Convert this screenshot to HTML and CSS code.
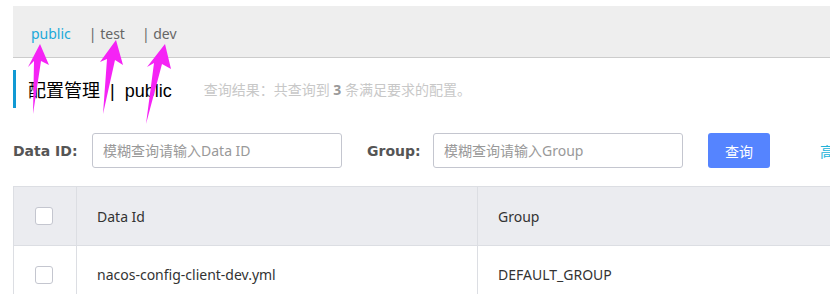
FILE: index.html
```html
<!DOCTYPE html>
<html>
    <head>
        <title>配置管理 - Nacos</title>
        <meta charset="utf-8">
        <link rel="stylesheet" href="styles.css">
    </head>
    <body>
        <div class="page">

            <div class="nsbar">
                <span class="ns active">public</span>
                <span class="ns">| test</span>
                <span class="ns">| dev</span>
            </div>

            <div class="title">
                <h1>配置管理<span class="sep">|</span>public</h1>
                <span class="summary">查询结果：共查询到 <b>3</b> 条满足要求的配置。</span>
            </div>

            <form class="search">
                <label for="dataId">Data ID:</label>
                <input type="text" id="dataId" placeholder="模糊查询请输入Data ID">
                <label for="group">Group:</label>
                <input type="text" id="group" placeholder="模糊查询请输入Group">
                <input class="btn" type="button" value="查询">
                <a class="advanced" href="#">高级查询</a>
            </form>

            <table class="configs">
                <tr class="head">
                    <th class="check"><span class="box"></span></th>
                    <th class="dataid">Data Id</th>
                    <th>Group</th>
                </tr>
                <tr>
                    <td class="check"><span class="box"></span></td>
                    <td>nacos-config-client-dev.yml</td>
                    <td>DEFAULT_GROUP</td>
                </tr>
            </table>

        </div>

        <!-- annotation arrows drawn over the screenshot -->
        <svg class="arrows" width="830" height="294" viewBox="0 0 830 294">
            <polygon points="40,44 49,65 41,61 33,114 34,61 28,67" />
            <polygon points="116,40 123,65 115,60 103,114 107,59 100,62" />
            <polygon points="165,44 171,69 162,64 146,124 154,63 147,67" />
        </svg>
    </body>
</html>
```
FILE: styles.css
```css
*{
    margin: 0;
    padding: 0;
    box-sizing: border-box;
}

body{
    font-family: "Noto Sans", "Noto Sans CJK SC", sans-serif;
    color: #333;
    overflow: hidden;
}

.page{
    width: 1100px;
    padding: 6px 0 0 13px;
}

.nsbar{
    display: flex;
    align-items: center;
    height: 52px;
    padding: 3px 0 0 18px;
    background-color: #eeeeee;
    border-bottom: 1px solid #cccccc;
    font-size: 14px;
}

.ns{
    color: #666;
    margin-right: 17px;
}

.ns.active{
    color: #21a9d9;
    margin-right: 18px;
}

.title{
    display: flex;
    align-items: center;
    height: 38px;
    margin-top: 12px;
    padding-left: 12px;
    border-left: 3px solid #1199d3;
}

h1{
    font-family: "Liberation Sans", "Noto Sans CJK SC", sans-serif;
    font-size: 18px;
    font-weight: normal;
    color: #000;
}

.sep{
    margin: 0 10px;
}

.summary{
    margin-left: 32px;
    font-size: 14px;
    color: #c8c8c8;
}

.summary b{
    color: #999;
}

.search{
    display: flex;
    align-items: center;
    height: 35px;
    margin-top: 25px;
}

label{
    font-family: "DejaVu Sans", sans-serif;
    font-size: 14px;
    font-weight: bold;
    color: #555;
    width: 79px;
}

label[for=group]{
    width: 66px;
}

input[type=text]{
    width: 250px;
    height: 35px;
    margin-right: 25px;
    padding: 0 10px;
    border: 1px solid #c4c6cf;
    border-radius: 3px;
    font-family: inherit;
    font-size: 14px;
    color: #333;
}

input::placeholder{
    color: #999;
}

.btn{
    width: 62px;
    height: 35px;
    border: none;
    border-radius: 3px;
    background-color: #5584ff;
    color: #fff;
    font-family: inherit;
    font-size: 14px;
}

.advanced{
    margin-left: 50px;
    font-size: 14px;
    color: #21b3d9;
    text-decoration: none;
}

.configs{
    margin-top: 18px;
    width: 1000px;
    border-collapse: collapse;
    border-left: 1px solid #dcdee3;
    border-top: 1px solid #dcdee3;
    font-size: 14px;
    color: #333;
}

th, td{
    text-align: left;
    font-weight: normal;
    padding: 0 20px;
    border-right: 1px solid #dcdee3;
    border-bottom: 1px solid #dcdee3;
}

.head{
    height: 59px;
    background-color: #ebecf0;
}

td{
    height: 58px;
}

.check{
    width: 63px;
    padding: 0 21px;
}

.dataid{
    width: 401px;
}

.box{
    display: block;
    width: 18px;
    height: 18px;
    background-color: #fff;
    border: 1px solid #c4c6cf;
    border-radius: 3px;
}

.arrows{
    position: absolute;
    top: 0;
    left: 0;
    pointer-events: none;
}

.arrows polygon{
    fill: #f523f5;
}
```
